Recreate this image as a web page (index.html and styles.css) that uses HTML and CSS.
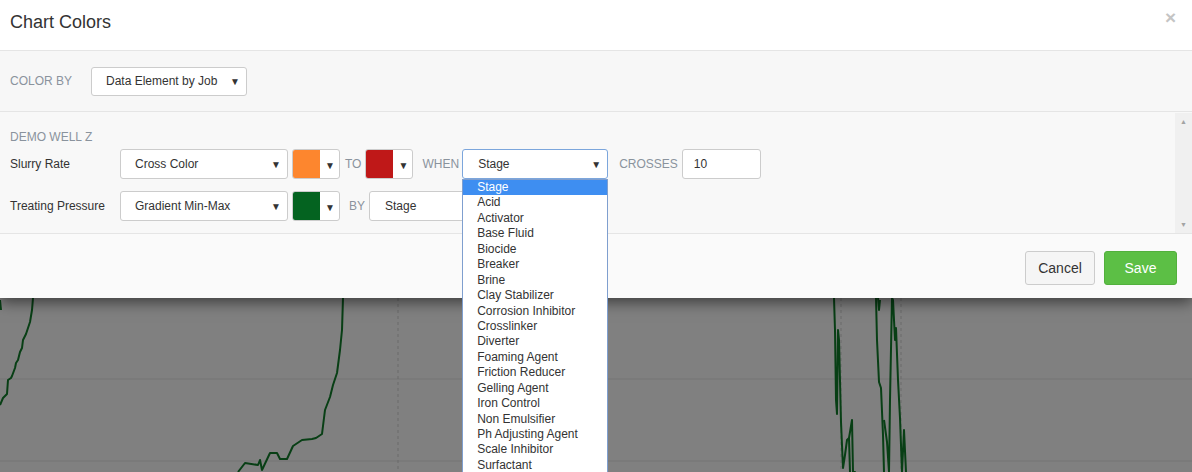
FILE: index.html
```html
<!DOCTYPE html>
<html lang="en">
<head>
    <meta charset="UTF-8">
    <title>Chart Colors</title>
    <link rel="stylesheet" href="styles.css">
</head>
<body>
    <div class="modal">
        <div class="modal-header">
            <h3>Chart Colors</h3>
            <span class="close">&times;</span>
        </div>
        <div class="color-by">
            <span class="caps">COLOR BY</span>
            <div class="select sel-colorby"><span>Data Element by Job</span><i>&#9660;</i></div>
        </div>
        <div class="rules">
            <div class="rules-body">
                <div class="caps well">DEMO WELL Z</div>
                <div class="row">
                    <label>Slurry Rate</label>
                    <div class="select sel-mode"><span>Cross Color</span><i>&#9660;</i></div>
                    <div class="swatch"><b class="orange"></b><i>&#9660;</i></div>
                    <span class="caps word w-to">TO</span>
                    <div class="swatch"><b class="red"></b><i>&#9660;</i></div>
                    <span class="caps word w-when">WHEN</span>
                    <div class="select sel-when focus"><span>Stage</span><i>&#9660;</i>
                        <ul class="dropdown">
                            <li class="active">Stage</li>
                            <li>Acid</li>
                            <li>Activator</li>
                            <li>Base Fluid</li>
                            <li>Biocide</li>
                            <li>Breaker</li>
                            <li>Brine</li>
                            <li>Clay Stabilizer</li>
                            <li>Corrosion Inhibitor</li>
                            <li>Crosslinker</li>
                            <li>Diverter</li>
                            <li>Foaming Agent</li>
                            <li>Friction Reducer</li>
                            <li>Gelling Agent</li>
                            <li>Iron Control</li>
                            <li>Non Emulsifier</li>
                            <li>Ph Adjusting Agent</li>
                            <li>Scale Inhibitor</li>
                            <li>Surfactant</li>
                        </ul>
                    </div>
                    <span class="caps word w-crosses">CROSSES</span>
                    <div class="input">10</div>
                </div>
                <div class="row">
                    <label>Treating Pressure</label>
                    <div class="select sel-mode"><span>Gradient Min-Max</span><i>&#9660;</i></div>
                    <div class="swatch"><b class="green"></b><i>&#9660;</i></div>
                    <span class="caps word w-by">BY</span>
                    <div class="select sel-by"><span>Stage</span><i>&#9660;</i></div>
                </div>
            </div>
            <div class="scrollbar"><i>&#9650;</i><i>&#9660;</i></div>
        </div>
        <div class="modal-footer">
            <button class="btn btn-cancel">Cancel</button>
            <button class="btn btn-save">Save</button>
        </div>
    </div>

    <div class="chart">
        <svg width="1192" height="174" viewBox="0 298 1192 174">
            <line class="grid" x1="0" y1="379" x2="1192" y2="379"/>
            <line class="grid" x1="0" y1="461" x2="1192" y2="461"/>
            <line class="vline" x1="398" y1="298" x2="398" y2="472"/>
            <line class="vline" x1="841" y1="298" x2="841" y2="472"/>
            <line class="vline" x1="901" y1="298" x2="901" y2="472"/>
            <polyline class="trace" points="0,300 1,310"/>
            <polyline class="trace" points="0,405 3,398 7,394 8,380 11,378 12,376 15,368 16,363 18,360 20,352 22,348 23,340 26,334 28,328 30,322 32,310 33,298"/>
            <polyline class="trace" points="238,472 245,463 258,465 260,460 262,470 270,453 277,453 280,459 287,459 293,446 302,440 312,439 316,438 322,434 325,410 330,397 333,385 337,373 340,350 342,330 343,298"/>
            <polyline class="trace" points="834,298 835,330 836,400 837,414 838,330 839,340 841,422 843,468 845,455 847,440 849,438 850,472"/>
            <polyline class="trace" points="849,438 852,420 853,472 855,472 857,480"/>
            <polyline class="trace" points="876,298 877,340 879,382 881,388 883,435 884,472"/>
            <polyline class="trace" points="884,420 887,442 889,472 890,400 892,298 893,300 895,340 896,328 898,380 900,418 902,472 904,430 906,472 908,482"/>
            <polyline class="trace" points="878,298 879,310 880,300"/>
        </svg>
    </div>
</body>
</html>
```

FILE: styles.css
```css
body {
    margin: 0;
    font-family: "Liberation Sans", Arial, sans-serif;
    color: #333;
    overflow: hidden;
    background: #808080;
}
.modal {
    position: relative;
    z-index: 2;
    background: #fff;
    box-shadow: 0 4px 14px rgba(0, 0, 0, 0.55);
}
.modal-header {
    height: 50px;
    border-bottom: 1px solid #e5e5e5;
    display: flex;
    justify-content: space-between;
    align-items: flex-start;
    padding: 0 15px 0 10px;
}
.modal-header h3 {
    margin: 12px 0 0;
    font-size: 18px;
    font-weight: normal;
    color: #333;
}
.close {
    color: #c4c4c4;
    font-size: 19px;
    font-weight: bold;
    margin-top: 7px;
    margin-right: 1px;
}
.caps {
    color: #8a939d;
    font-size: 12px;
    text-transform: uppercase;
}
.color-by {
    height: 60px;
    background: #f7f7f7;
    border-bottom: 1px solid #e5e5e5;
    display: flex;
    align-items: center;
    padding-left: 10px;
}
.color-by .caps {
    width: 81px;
}
.select {
    position: relative;
    height: 29px;
    box-sizing: border-box;
    border: 1px solid #ccc;
    border-radius: 3px;
    background: #fff;
    display: flex;
    align-items: center;
    justify-content: space-between;
    padding: 0 6px 0 14px;
    font-size: 12px;
}
.select i, .swatch i {
    font-style: normal;
    font-size: 10px;
    color: #333;
}
.sel-colorby { width: 156px; }
.sel-mode { width: 168px; height: 30px; }
.sel-when { width: 146px; height: 30px; padding-left: 15px; }
.sel-by { width: 146px; height: 30px; padding-left: 15px; }
.select.focus {
    border-color: #7ca6dc;
}
.rules {
    height: 121px;
    background: #f8f8f8;
    border-bottom: 1px solid #e5e5e5;
    display: flex;
}
.rules-body {
    flex: 1;
    padding: 18px 0 0 10px;
}
.well {
    line-height: 14px;
    margin-bottom: 5px;
}
.row {
    display: flex;
    align-items: center;
    height: 30px;
    margin-bottom: 12px;
}
.row label {
    width: 110px;
    font-size: 12px;
}
.swatch {
    width: 48px;
    height: 30px;
    box-sizing: border-box;
    border: 1px solid #ccc;
    border-radius: 3px;
    background: #fff;
    display: flex;
    align-items: center;
    margin-left: 4px;
}
.swatch b {
    width: 27px;
    height: 28px;
    flex-shrink: 0;
    border-radius: 2px 0 0 2px;
}
.swatch i {
    margin: 2px 0 0 5px;
}
.orange { background: #fd862e; }
.red { background: #bf1818; }
.green { background: #046320; }
.word {
    flex-shrink: 0;
}
.w-to { margin: 0 0 0 5px; }
.w-when { margin: 0 3px 0 9px; }
.w-crosses { margin: 0 4px 0 11px; }
.w-by { margin: 0 4px 0 9px; }
.input {
    width: 79px;
    height: 30px;
    box-sizing: border-box;
    border: 1px solid #ccc;
    border-radius: 3px;
    background: #fff;
    font-size: 12px;
    line-height: 28px;
    padding-left: 11px;
}
.dropdown {
    position: absolute;
    top: 29px;
    left: -1px;
    width: 146px;
    box-sizing: border-box;
    margin: 0;
    padding: 0;
    list-style: none;
    background: #fff;
    border: 1px solid #7f9fcf;
    z-index: 5;
}
.dropdown li {
    font-size: 12px;
    line-height: 15.44px;
    padding-left: 14px;
    color: #333;
}
.dropdown li.active {
    background: #3e8ef1;
    color: #fff;
}
.scrollbar {
    width: 17px;
    background: #f0f0f0;
    display: flex;
    flex-direction: column;
    justify-content: space-between;
    align-items: center;
    padding: 5px 0;
    box-sizing: border-box;
    margin-top: 1px;
}
.scrollbar i {
    font-style: normal;
    font-size: 7px;
    color: #a3a3a3;
}
.modal-footer {
    height: 64px;
    box-sizing: border-box;
    padding: 3px 15px 0 0;
    background: #fafafa;
    display: flex;
    justify-content: flex-end;
    align-items: center;
}
.btn {
    font-family: "Liberation Sans", Arial, sans-serif;
    font-size: 14px;
    height: 34px;
    border-radius: 3px;
    border: 1px solid #ccc;
    cursor: pointer;
}
.btn-cancel {
    width: 70px;
    background: #f5f5f5;
    color: #333;
    margin-right: 9px;
}
.btn-save {
    width: 73px;
    background: #5cbf45;
    border-color: #52b03d;
    color: #fff;
}
.chart svg {
    display: block;
}
.grid {
    stroke: #747474;
    stroke-width: 1;
}
.vline {
    stroke: #6a6a6a;
    stroke-width: 1;
    stroke-dasharray: 3 3;
}
.trace {
    fill: none;
    stroke: #083f15;
    stroke-width: 2;
    stroke-linejoin: round;
}
```
